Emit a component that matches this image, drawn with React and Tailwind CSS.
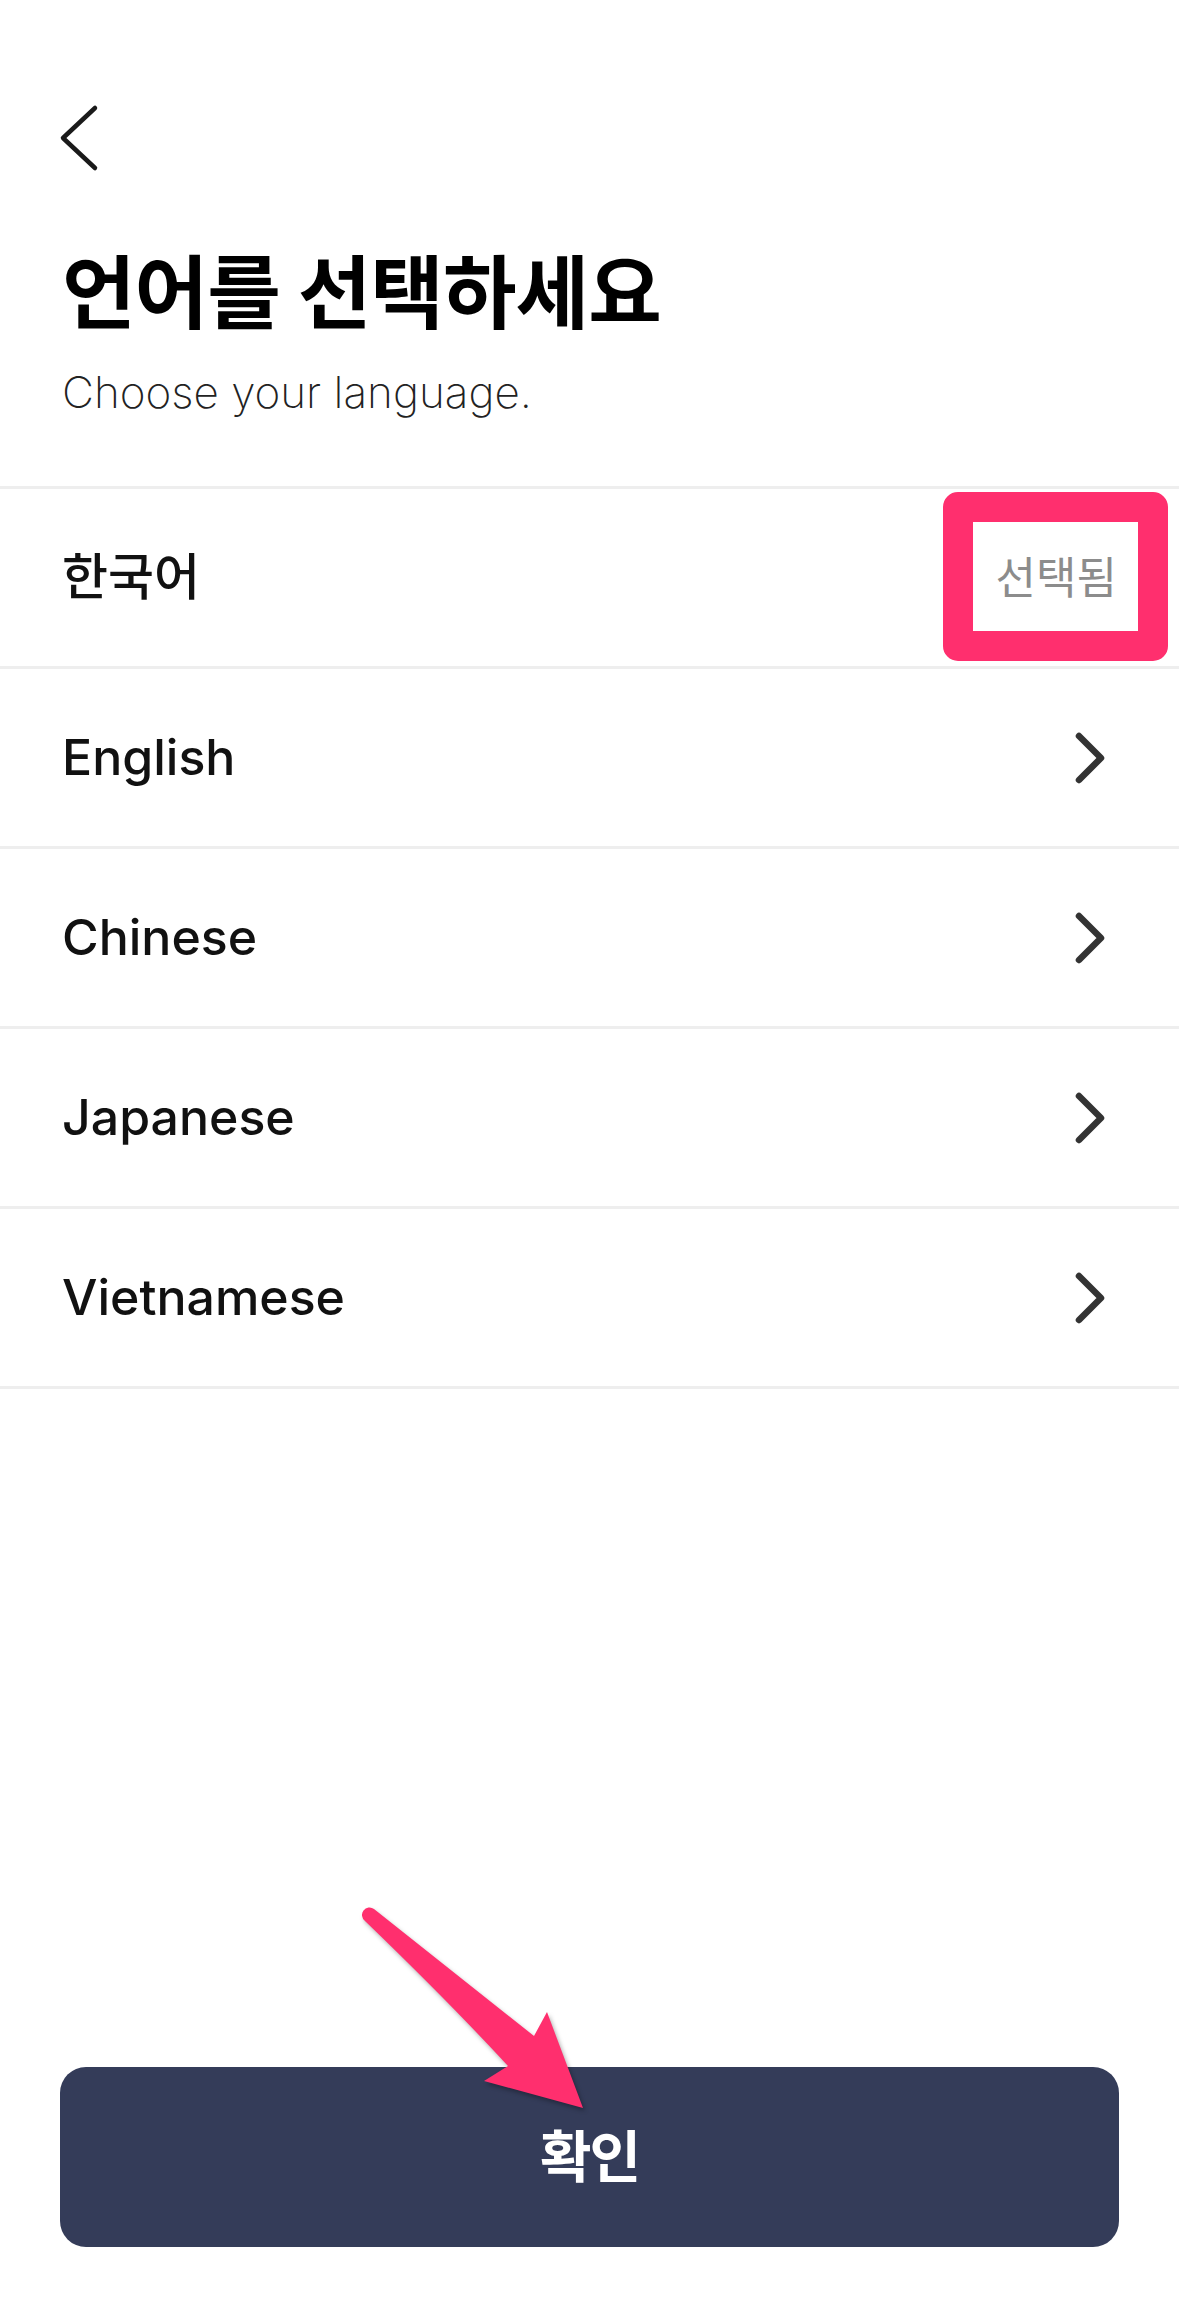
import React from "react";

const languages = ["English", "Chinese", "Japanese", "Vietnamese"];

const ChevronRight = () => (
  <svg width="44" height="64" viewBox="0 0 44 64" fill="none">
    <path
      d="M12 10 L34 32 L12 54"
      stroke="#333333"
      strokeWidth="6.5"
      strokeLinecap="round"
      strokeLinejoin="round"
    />
  </svg>
);

const LanguageSelect = () => {
  return (
    <div
      className="relative flex min-h-[2324px] w-[1179px] flex-col bg-white text-[#111]"
      style={{ fontFamily: "Inter, 'Noto Sans CJK KR', sans-serif" }}
    >
      {/* Header */}
      <div className="flex h-[486px] flex-col px-[62px] pt-[102px]">
        <button className="h-[72px] w-[44px] -ml-[4px]">
          <svg width="44" height="72" viewBox="0 0 44 72" fill="none">
            <path
              d="M37 6 L5 36 L37 66"
              stroke="#1a1a1a"
              strokeWidth="4.5"
              strokeLinecap="round"
              strokeLinejoin="round"
            />
          </svg>
        </button>
        <h1 className="mt-[79px] text-[80px] leading-none font-bold tracking-[-1px] text-black">
          언어를 선택하세요
        </h1>
        <p className="mt-[37px] text-[44px] leading-none font-extralight text-[#222]">
          Choose your language.
        </p>
      </div>

      {/* Language list */}
      <div className="border-t-[3px] border-[#eeeeee]">
        <div className="relative flex h-[180px] items-center justify-between border-b-[3px] border-[#eeeeee] pl-[62px] pr-[62px]">
          <span className="text-[50px] font-medium text-[#111]">한국어</span>
          <span className="text-[44px] text-[#8c8c8c]">선택됨</span>
          {/* highlight frame */}
          <div className="pointer-events-none absolute right-[11px] top-[3px] h-[169px] w-[225px] rounded-[15px] border-[30px] border-[#ff2f6e]" />
        </div>
        {languages.map((lang) => (
          <div
            key={lang}
            className="flex h-[180px] items-center justify-between border-b-[3px] border-[#eeeeee] pl-[62px] pr-[68px]"
          >
            <span className="text-[50px] font-medium text-[#111]">{lang}</span>
            <ChevronRight />
          </div>
        ))}
      </div>

      <div className="flex-1" />

      {/* Confirm button */}
      <div className="mb-[77px] px-[60px]">
        <button className="flex h-[180px] w-full items-center justify-center rounded-[26px] bg-[#343c59] text-[56px] font-semibold tracking-[-2px] text-white">
          확인
        </button>
      </div>

      {/* annotation arrow */}
      <svg
        className="pointer-events-none absolute inset-0 drop-shadow-[2px_3px_2px_rgba(0,0,0,0.3)]"
        width="1179"
        height="2324"
        viewBox="0 0 1179 2324"
      >
        <path
          d="M374 1909 L534 2036 L547 2012 L583 2108 L484 2081 L508 2066 Q450 2003 365 1921 A6 6 0 0 1 374 1909 Z"
          fill="#ff2f6e"
        />
      </svg>
    </div>
  );
};

export default function App() {
  return <LanguageSelect />;
}
